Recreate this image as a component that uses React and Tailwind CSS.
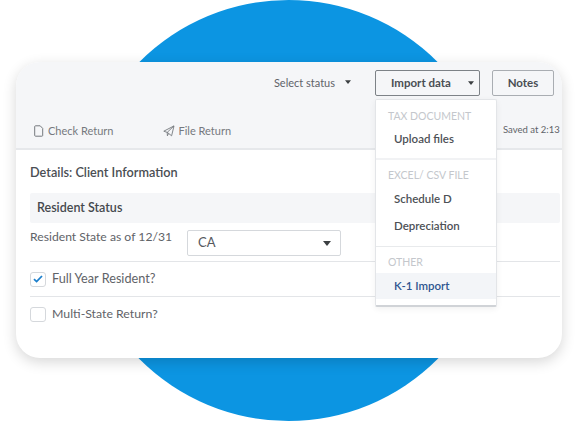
import React from 'react';

const Caret = ({ className = '' }) => (
  <svg viewBox="0 0 8 5" className={className} fill="currentColor">
    <path d="M0 0h8L4 5z" />
  </svg>
);

const MenuLabel = ({ children, className = '' }) => (
  <div className={`pl-[12px] text-[10.5px] leading-[14px] text-[#c4c7cc] ${className}`}>{children}</div>
);

const MenuItem = ({ children, className = '' }) => (
  <div className={`pl-[18px] text-[11.5px] leading-[16px] font-semibold text-[#4d5156] ${className}`}>{children}</div>
);

const ImportMenu = () => (
  <div className="absolute left-[359px] top-[37px] z-10 h-[208px] w-[122px] rounded-[2px] border border-[#e3e5e8] border-b-2 border-b-[#d0d3d7] bg-white shadow-[0_2px_6px_rgba(0,0,0,0.06)]">
    <MenuLabel className="mt-[9px]">TAX DOCUMENT</MenuLabel>
    <MenuItem className="mt-[8px]">Upload files</MenuItem>
    <div className="mt-[11px] border-t-2 border-[#f1f2f4]" />
    <MenuLabel className="mt-[8px]">EXCEL/ CSV FILE</MenuLabel>
    <MenuItem className="mt-[9px]">Schedule D</MenuItem>
    <MenuItem className="mt-[11px]">Depreciation</MenuItem>
    <div className="mt-[12px] border-t border-[#e8eaec]" />
    <MenuLabel className="mt-[8px]">OTHER</MenuLabel>
    <div className="mt-[4px] flex h-[26px] items-center bg-[#f3f5f8] pl-[18px] text-[11.5px] font-semibold text-[#2f5590]">
      K-1 Import
    </div>
  </div>
);

const Toolbar = () => (
  <div className="h-[88px] border-b-2 border-[#e6e8eb] bg-[#f5f6f8] pr-[8px]">
    <div className="flex items-start justify-end pt-[8px]">
      <div className="mt-[6px] flex items-center text-[11px] leading-[14px] text-[#5f6368]">
        Select status
        <Caret className="ml-[10px] mb-[2px] h-[4px] w-[6px] text-[#3c4043]" />
      </div>
      <button className="ml-[24px] flex h-[26px] w-[105px] items-center rounded-[2px] border border-[#7d8287] pl-[15px] text-[11.5px] font-bold text-[#4a4e53]">
        Import data
        <Caret className="ml-[17px] h-[4px] w-[6px] text-[#3c4043]" />
      </button>
      <button className="ml-[12px] h-[26px] w-[62px] rounded-[2px] border border-[#a9adb2] text-[11.5px] font-bold text-[#4a4e53]">
        Notes
      </button>
    </div>
    <div className="mt-[27px] flex items-center pl-[18px] text-[11px] leading-[14px] text-[#75797e]">
      <svg viewBox="0 0 10 12" className="h-[12px] w-[10px]" fill="none" stroke="currentColor" strokeWidth="1">
        <path d="M1.5.8h4.7l2.5 2.6v7a.8.8 0 0 1-.8.8H1.5a.8.8 0 0 1-.8-.8V1.6a.8.8 0 0 1 .8-.8z" />
      </svg>
      <span className="ml-[4px]">Check Return</span>
      <svg viewBox="0 0 12 12" className="ml-[50px] h-[12px] w-[12px]" fill="none" stroke="currentColor" strokeWidth="0.9" strokeLinejoin="round">
        <path d="M11 .9 .8 6.2l3.4 1.2L11 .9 8.6 10.8 5.6 8.4 4.2 7.4l.2 3.4 1.2-2.4" />
      </svg>
      <span className="ml-[3px]">File Return</span>
      <span className="ml-auto mr-[-8px] mb-[2px] w-[59px] overflow-hidden whitespace-nowrap text-[9.5px] text-[#5f6368]">Saved at 2:13</span>
    </div>
  </div>
);

const Details = () => (
  <div className="pl-[14px] pr-[2px] text-[#5f6368]">
    <div className="pt-[14px] text-[12.7px] leading-[16px] font-semibold text-[#4a4e53]">Details: Client Information</div>
    <div className="mt-[13px] flex h-[30px] items-center rounded-[2px] bg-[#f5f6f8] pl-[7px] text-[12.5px] font-semibold text-[#45494e]">
      Resident Status
    </div>
    <div className="flex h-[39px] items-start border-b border-[#e3e5e8]">
      <span className="mt-[6px] w-[157px] text-[12.2px] leading-[16px]">Resident State as of 12/31</span>
      <div className="mt-[7px] flex h-[26px] w-[154px] items-center justify-between rounded-[2px] border border-[#d5d8dc] pl-[10px] pr-[9px] text-[13px] text-[#55595e]">
        CA
        <Caret className="h-[5px] w-[8px] text-[#3c4043]" />
      </div>
    </div>
    <div className="flex h-[35px] items-center gap-[6px] border-b border-[#e3e5e8] text-[12.7px]">
      <span className="flex h-[15px] w-[16px] items-center justify-center rounded-[3px] border border-[#d5d8dc]">
        <svg viewBox="0 0 10 8" className="h-[8px] w-[10px]" fill="none" stroke="#1b7fcc" strokeWidth="1.8">
          <path d="M1 4.2 3.6 6.6 9 1" />
        </svg>
      </span>
      Full Year Resident?
    </div>
    <div className="flex h-[34px] items-center gap-[6px] text-[12.3px]">
      <span className="h-[15px] w-[16px] rounded-[3px] border border-[#d5d8dc]" />
      Multi-State Return?
    </div>
  </div>
);

export default function App() {
  return (
    <div className="relative h-[421px] w-[578px] overflow-hidden bg-white font-['Lato','Noto_Sans',sans-serif]">
      {/* blue circle behind the card */}
      <div className="absolute left-[78px] top-0 h-[421px] w-[421px] rounded-full bg-[#0c95e2]" />
      <div className="relative ml-[16px] w-[546px] pt-[62px]">
        <div className="relative h-[296px] overflow-visible rounded-[24px] bg-white shadow-[0_4px_14px_rgba(0,0,0,0.16)]">
          <div className="overflow-hidden rounded-t-[24px]">
            <Toolbar />
          </div>
          <Details />
          <ImportMenu />
        </div>
      </div>
    </div>
  );
}
